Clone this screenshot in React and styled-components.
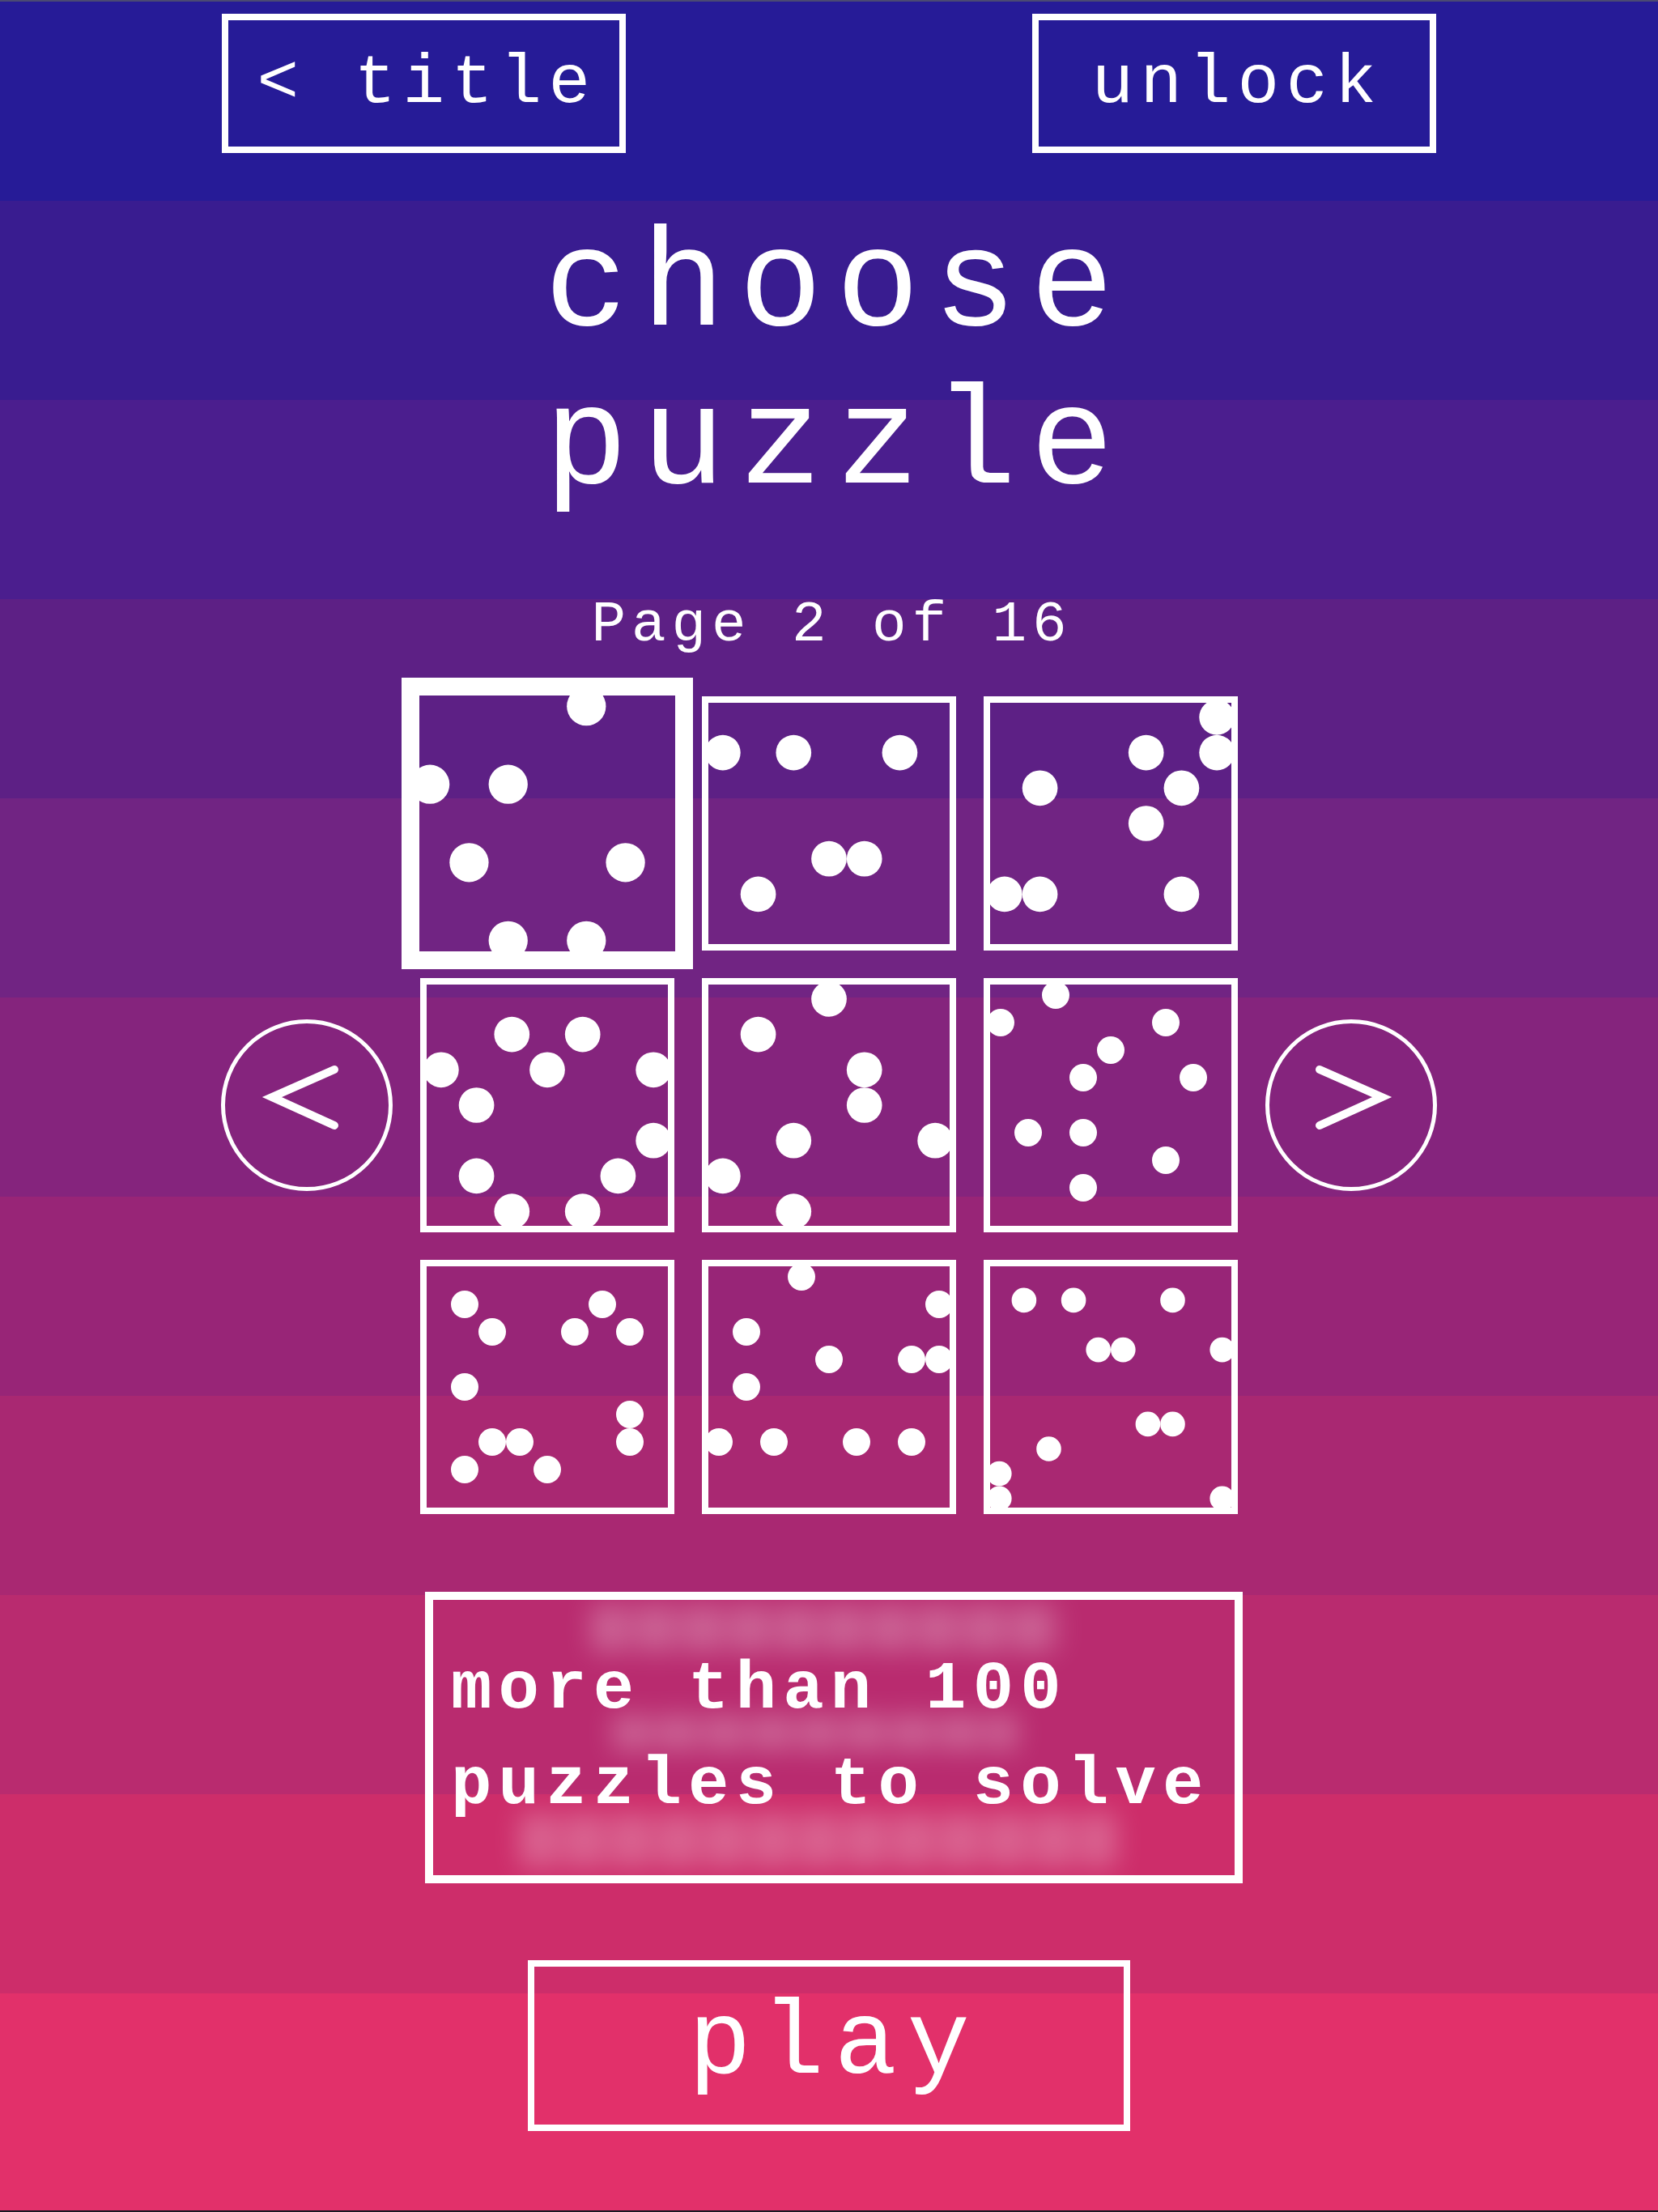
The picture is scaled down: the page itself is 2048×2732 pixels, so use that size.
import React from 'react';
import styled, { createGlobalStyle } from 'styled-components';

const GlobalStyle = createGlobalStyle`
  html, body {
    margin: 0;
    padding: 0;
    background: #261b97;
  }
  * {
    box-sizing: border-box;
  }
`;

// one colour per horizontal stripe, dark blue at the top to pink at the bottom
const BANDS = [
  '#261b97', '#391c90', '#4b1e8e', '#5d2085', '#712483', '#85247d',
  '#982577', '#a92872', '#b92b6f', '#cd2d6a', '#e2306a',
];
const BAND_HEIGHT = 246;

const bandGradient = BANDS.map((c, i) => {
  const start = i * BAND_HEIGHT;
  const end = i === BANDS.length - 1 ? '100%' : `${(i + 1) * BAND_HEIGHT}px`;
  return `${c} ${start}px ${end}`;
}).join(', ');

// the mono face we have draws taller letters than a typewriter face,
// so it is set smaller and tracked out to keep the same column width
const mono = size => `
  font-size: ${Math.round(size * 0.86)}px;
  letter-spacing: ${(size * 0.084).toFixed(1)}px;
`;

const puzzles = [
  { n: 7, selected: true, dots: [[4, 0], [0, 2], [2, 2], [1, 4], [5, 4], [2, 6], [4, 6]] },
  { n: 7, dots: [[0, 1], [2, 1], [5, 1], [3, 4], [4, 4], [1, 5]] },
  { n: 7, dots: [[6, 0], [4, 1], [6, 1], [1, 2], [5, 2], [4, 3], [0, 5], [1, 5], [5, 5]] },
  { n: 7, dots: [[2, 1], [4, 1], [0, 2], [3, 2], [6, 2], [1, 3], [6, 4], [1, 5], [5, 5], [2, 6], [4, 6]] },
  { n: 7, dots: [[3, 0], [1, 1], [4, 2], [4, 3], [2, 4], [6, 4], [0, 5], [2, 6]] },
  { n: 9, dots: [[2, 0], [0, 1], [6, 1], [4, 2], [3, 3], [7, 3], [1, 5], [3, 5], [6, 6], [3, 7]] },
  { n: 9, dots: [[1, 1], [6, 1], [2, 2], [5, 2], [7, 2], [1, 4], [7, 5], [2, 6], [3, 6], [7, 6], [1, 7], [4, 7]] },
  { n: 9, dots: [[3, 0], [8, 1], [1, 2], [4, 3], [7, 3], [8, 3], [1, 4], [0, 6], [2, 6], [5, 6], [7, 6]] },
  { n: 10, dots: [[1, 1], [3, 1], [7, 1], [4, 3], [5, 3], [9, 3], [6, 6], [7, 6], [2, 7], [0, 8], [0, 9], [9, 9]] },
];

// faded previous message behind the info text: [left offset, width, height]
const ghostRows = [
  [195, 580, 58],
  [222, 500, 44],
  [107, 737, 66],
];

const PuzzleThumb = ({ n, dots, selected }) => {
  const size = selected ? 360 : 314;
  const stroke = selected ? 22 : 8;
  const box = size - stroke;
  const step = box / n;
  return (
    <Thumb $selected={selected}>
      <svg width={size} height={size} viewBox={`0 0 ${size} ${size}`}>
        {dots.map(([x, y], i) => (
          <circle
            key={i}
            cx={stroke / 2 + step * (x + 0.5)}
            cy={stroke / 2 + step * (y + 0.5)}
            r={step / 2}
            fill="#fff"
          />
        ))}
        <rect
          x={stroke / 2}
          y={stroke / 2}
          width={box}
          height={box}
          fill="none"
          stroke="#fff"
          strokeWidth={stroke}
        />
      </svg>
    </Thumb>
  );
};

const Arrow = ({ dir }) => (
  <ArrowButton aria-label={dir === 'left' ? 'previous page' : 'next page'}>
    <svg width="212" height="212" viewBox="0 0 212 212">
      <circle cx="106" cy="106" r="103.5" fill="none" stroke="#fff" strokeWidth="5" />
      <path
        d={dir === 'left' ? 'M140 62 L63 96 L140 131' : 'M67 62 L144 96 L67 131'}
        fill="none"
        stroke="#fff"
        strokeWidth="10"
        strokeLinecap="round"
        strokeLinejoin="miter"
      />
    </svg>
  </ArrowButton>
);

const App = () => {
  return (
    <>
      <GlobalStyle />
      <Screen>
        <TopBar>
          <OutlineButton>&lt; title</OutlineButton>
          <OutlineButton>unlock</OutlineButton>
        </TopBar>

        <Heading>
          choose
          <br />
          puzzle
        </Heading>

        <PageLabel>Page 2 of 16</PageLabel>

        <Picker>
          <Arrow dir="left" />
          <PuzzleGrid>
            {puzzles.map((p, i) => (
              <PuzzleThumb key={i} {...p} />
            ))}
          </PuzzleGrid>
          <Arrow dir="right" />
        </Picker>

        <InfoBox>
          <Ghost aria-hidden="true">
            {ghostRows.map(([left, width, height], i) => (
              <GhostRow key={i} $left={left} $width={width} $height={height} />
            ))}
          </Ghost>
          <InfoText>more than 100 puzzles to solve</InfoText>
        </InfoBox>

        <PlayButton>play</PlayButton>
      </Screen>
    </>
  );
};

const Screen = styled.div`
  min-height: 100vh;
  display: flex;
  flex-direction: column;
  align-items: center;
  border-top: 2px solid #4b4a73;
  border-bottom: 2px solid #1a1a22;
  background: linear-gradient(to bottom, ${bandGradient});
  color: #fff;
  font-family: "Liberation Mono", "Courier New", monospace;
`;

const TopBar = styled.div`
  width: 1500px;
  margin-top: 15px;
  display: flex;
  justify-content: space-between;
`;

const OutlineButton = styled.button`
  width: 499px;
  height: 172px;
  padding: 0 0 0 8px;
  border: 8px solid #fff;
  background: transparent;
  color: #fff;
  font-family: inherit;
  ${mono(100)}
  line-height: 1;
  display: flex;
  align-items: center;
  justify-content: center;
  white-space: pre;
  cursor: pointer;
`;

const Heading = styled.h1`
  margin: 69px 0 0;
  padding-left: 17px;
  ${mono(200)}
  font-weight: normal;
  line-height: 195px;
  text-align: center;
`;

const PageLabel = styled.div`
  margin-top: 78px;
  padding-left: 7px;
  ${mono(82)}
  line-height: 92px;
  white-space: pre;
`;

const Picker = styled.div`
  margin-top: 42px;
  display: flex;
  align-items: center;
  gap: 34px;
`;

const ArrowButton = styled.button`
  width: 212px;
  height: 212px;
  padding: 0;
  border: none;
  background: transparent;
  display: block;
  cursor: pointer;

  svg {
    display: block;
  }
`;

const PuzzleGrid = styled.div`
  display: grid;
  grid-template-columns: repeat(3, 314px);
  grid-auto-rows: 314px;
  gap: 34px;
`;

const Thumb = styled.div`
  width: ${p => (p.$selected ? 360 : 314)}px;
  height: ${p => (p.$selected ? 360 : 314)}px;
  margin: ${p => (p.$selected ? -23 : 0)}px;
  cursor: pointer;

  svg {
    display: block;
  }
`;

const InfoBox = styled.div`
  position: relative;
  margin-top: 96px;
  margin-left: 12px;
  width: 1010px;
  height: 360px;
  border: 10px solid #fff;
  padding: 0 16px 0 22px;
  display: flex;
  align-items: center;
  overflow: hidden;
`;

const Ghost = styled.div`
  position: absolute;
  inset: 0;
  padding-top: 6px;
  display: flex;
  flex-direction: column;
  gap: 78px;
  filter: blur(16px);
  opacity: 0.26;
  pointer-events: none;
`;

const GhostRow = styled.div`
  margin-left: ${p => p.$left}px;
  width: ${p => p.$width}px;
  height: ${p => p.$height}px;
  background: repeating-linear-gradient(
    to right,
    #fff 0 44px,
    rgba(255, 255, 255, 0.45) 44px 58px
  );
`;

const InfoText = styled.p`
  position: relative;
  margin: 0;
  ${mono(98)}
  font-weight: bold;
  line-height: 118px;
`;

const PlayButton = styled.button`
  margin-top: 95px;
  width: 744px;
  height: 211px;
  padding: 0 0 0 13px;
  border: 8px solid #fff;
  background: transparent;
  color: #fff;
  font-family: inherit;
  ${mono(150)}
  line-height: 1;
  display: flex;
  align-items: center;
  justify-content: center;
  cursor: pointer;
`;

export default App;
